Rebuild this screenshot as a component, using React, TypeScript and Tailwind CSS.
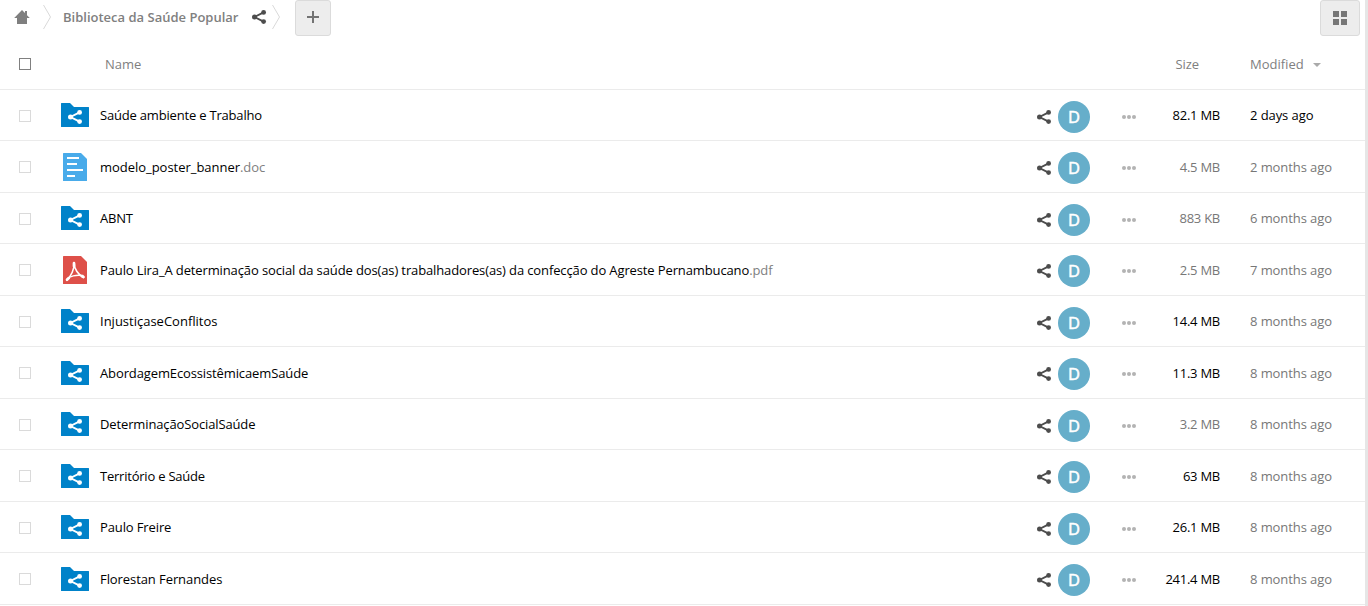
import React from 'react';

type Item = { name: string; ext?: string; kind: 'folder' | 'doc' | 'pdf'; tracking: string; size: string; strong?: boolean; date: string; recent?: boolean };

const items: Item[] = [
  { name: 'Saúde ambiente e Trabalho', kind: 'folder', tracking: 'tracking-[-0.19px]', size: '82.1 MB', strong: true, date: '2 days ago', recent: true },
  { name: 'modelo_poster_banner', ext: '.doc', kind: 'doc', tracking: 'tracking-[-0.03px]', size: '4.5 MB', date: '2 months ago' },
  { name: 'ABNT', kind: 'folder', tracking: 'tracking-[-0.2px]', size: '883 KB', date: '6 months ago' },
  { name: 'Paulo Lira_A determinação social da saúde dos(as) trabalhadores(as) da confecção do Agreste Pernambucano', ext: '.pdf', kind: 'pdf', tracking: 'tracking-[-0.122px]', size: '2.5 MB', date: '7 months ago' },
  { name: 'InjustiçaseConflitos', kind: 'folder', tracking: 'tracking-normal', size: '14.4 MB', strong: true, date: '8 months ago' },
  { name: 'AbordagemEcossistêmicaemSaúde', kind: 'folder', tracking: 'tracking-[-0.12px]', size: '11.3 MB', strong: true, date: '8 months ago' },
  { name: 'DeterminaçãoSocialSaúde', kind: 'folder', tracking: 'tracking-[-0.13px]', size: '3.2 MB', date: '8 months ago' },
  { name: 'Território e Saúde', kind: 'folder', tracking: 'tracking-[-0.22px]', size: '63 MB', strong: true, date: '8 months ago' },
  { name: 'Paulo Freire', kind: 'folder', tracking: 'tracking-[-0.12px]', size: '26.1 MB', strong: true, date: '8 months ago' },
  { name: 'Florestan Fernandes', kind: 'folder', tracking: 'tracking-[-0.08px]', size: '241.4 MB', strong: true, date: '8 months ago' },
];

function ShareShape() {
  return (
    <g fill="currentColor" stroke="none">
      <circle cx="12.600" cy="3.400" r="2.400" />
      <circle cx="3.500" cy="8" r="2.500" />
      <circle cx="12.600" cy="12.600" r="2.400" />
      <path d="M12.600 3.400 3.500 8l9.100 4.600" fill="none" stroke="currentColor" strokeWidth="1.900" />
    </g>
  );
}

function Share({ className }: { className?: string }) {
  return (
    <svg viewBox="0 0 16 16" className={className}>
      <ShareShape />
    </svg>
  );
}

function FileIcon({ kind }: { kind: Item['kind'] }) {
  return (
    <svg viewBox="0 0 32 32" className="size-8 shrink-0">
      {kind === 'folder' && (
        <>
          <path d="M2.500 4H11l4 4h14.500a.5.5 0 0 1 .5.5v19a.5.5 0 0 1-.5.5h-27a.5.500 0 0 1-.5-.5v-23a.5.5 0 0 1 .5-.5z" fill="#0082c9" />
          <g transform="translate(8 10)" className="text-white"><ShareShape /></g>
        </>
      )}
      {kind === 'doc' && (
        <>
          <path d="M4.500 2H22l6 6v21.500a.5.5 0 0 1-.5.5h-23a.5.500 0 0 1-.5-.5v-27a.5.5 0 0 1 .5-.5z" fill="#49abea" />
          <path d="M8 6h12v2H8zM8 12h10v2H8zM8 18h16v2H8zM8 24h8v2H8z" fill="#fff" />
        </>
      )}
      {kind === 'pdf' && (
        <>
          <path d="M4.500 2H22l6 6v21.500a.5.5 0 0 1-.5.5h-23a.5.500 0 0 1-.5-.5v-27a.5.5 0 0 1 .5-.5z" fill="#de5049" />
          <path d="M15.200 8.800c.5 6-3.200 13.500-7.400 17.400M15.200 8.800c-.4 5.500 4 12 9.400 14.600" fill="none" stroke="#fff" strokeWidth="1.600" strokeLinecap="round" />
          <path d="M15 9.200v3M8 25.700l1.800-1.600M23 22.300l1.500.7" fill="none" stroke="#fff" strokeWidth="2.700" strokeLinecap="round" />
          <path d="M8 25.200c2.500-2.600 9-5 15.800-3.600" fill="none" stroke="#fff" strokeWidth="1.500" strokeLinecap="round" />
        </>
      )}
    </svg>
  );
}

function Crumb() {
  return (
    <svg viewBox="0 0 8 24" className="h-6 w-2 shrink-0" fill="none" stroke="#d9d9d9"><path d="M.5 0 7.500 12 .5 24" /></svg>
  );
}

function Row({ item, odd }: { item: Item; odd: boolean }) {
  const pad = odd ? 'pt-[9px]' : 'pt-2.5';
  return (
    <div className={`flex border-b border-[#ebebeb] ${odd ? 'h-[51px]' : 'h-[52px]'}`}>
      <span className="ml-[19px] mt-5 size-3 shrink-0 border border-[#dadada]" />
      <div className={`ml-7 flex min-w-0 flex-1 ${pad}`}>
        <FileIcon kind={item.kind} />
        <div className={`ml-[9px] h-8 whitespace-nowrap leading-8 text-black ${item.tracking}`}>
          {item.name}<span className="text-[#808080]">{item.ext}</span>
        </div>
      </div>
      <Share className="mr-1.5 mt-[19px] size-4 shrink-0 text-[#4d4d4d]" />
      <div className="mt-[11px] size-8 shrink-0 rounded-full bg-[#66aeca] text-center text-[16.5px] leading-8 text-white [-webkit-text-stroke:0.5px_white]">D</div>
      <svg viewBox="0 0 16 16" className="ml-[31px] mt-[19px] size-4 shrink-0" fill="#b3b3b3">
        <circle cx="3" cy="8" r="2" /><circle cx="8" cy="8" r="2" /><circle cx="13" cy="8" r="2" />
      </svg>
      <div className={`w-[83px] shrink-0 text-right leading-8 tracking-[-0.25px] ${item.strong ? 'text-black' : 'text-[#777]'} ${pad}`}>{item.size}</div>
      <div className={`ml-[30px] w-[115px] shrink-0 leading-8 tracking-[-0.08px] ${item.recent ? 'text-black' : 'text-[#777]'} ${pad}`}>{item.date}</div>
    </div>
  );
}

export default function App() {
  return (
    <div className="flex h-[606px] w-[1368px] overflow-hidden bg-white font-['Open_Sans',sans-serif] text-[13px] text-[#808080]">
      <main className="w-[1365px] shrink-0">
        <header className="flex h-9">
          <svg viewBox="0 0 16 16" className="ml-3.5 mt-[9px] size-4 shrink-0" fill="#7f7f7f"><path d="M8 1 .2 9H3v6h10V9h2.800L13 6.200V2h-2v2.100z" /></svg>
          <div className="ml-[13px] mt-[5px]"><Crumb /></div>
          <span className="ml-3 w-[176px] whitespace-nowrap font-semibold leading-[34px]">Biblioteca da Saúde Popular</span>
          <Share className="ml-3 mt-[9px] size-4 shrink-0 text-[#4d4d4d]" />
          <div className="ml-[5px] mt-[5px]"><Crumb /></div>
          <button className="ml-[15px] flex size-9 items-center justify-center rounded-[3px] border border-[#dbdbdb] bg-[#ededed]">
            <svg viewBox="0 0 12 12" className="-mt-0.5 size-3" fill="#737373"><path d="M5 0h2v5h5v2H7v5H5V7H0V5h5z" /></svg>
          </button>
          <button className="ml-auto mr-[5px] flex h-9 w-10 items-center justify-center rounded-[3px] border border-[#dbdbdb] bg-[#ededed]">
            <svg viewBox="0 0 14 14" className="size-3.5" fill="#777"><path d="M0 0h6v6H0zM8 0h6v6H8zM0 8h6v6H0zM8 8h6v6H8z" /></svg>
          </button>
        </header>
        <div className="flex h-[54px] border-b border-[#ebebeb] leading-[56px]">
          <span className="ml-[19px] mt-[22px] size-3 border border-[#808080]" />
          <span className="ml-[74px] flex-1">Name</span>
          <span className="mr-[51px] w-[45px] text-right tracking-[-0.1px]">Size</span>
          <span className="flex w-[115px] items-start">Modified
            <svg viewBox="0 0 8 4" className="ml-[9px] mt-[27px] h-1 w-2" fill="#aaa"><path d="M0 0h8L4 4z" /></svg>
          </span>
        </div>
        {items.map((item, i) => <Row key={item.name} item={item} odd={i % 2 === 0} />)}
      </main>
      <div className="w-[3px] shrink-0 bg-[#e6e6e6]" />
    </div>
  );
}
